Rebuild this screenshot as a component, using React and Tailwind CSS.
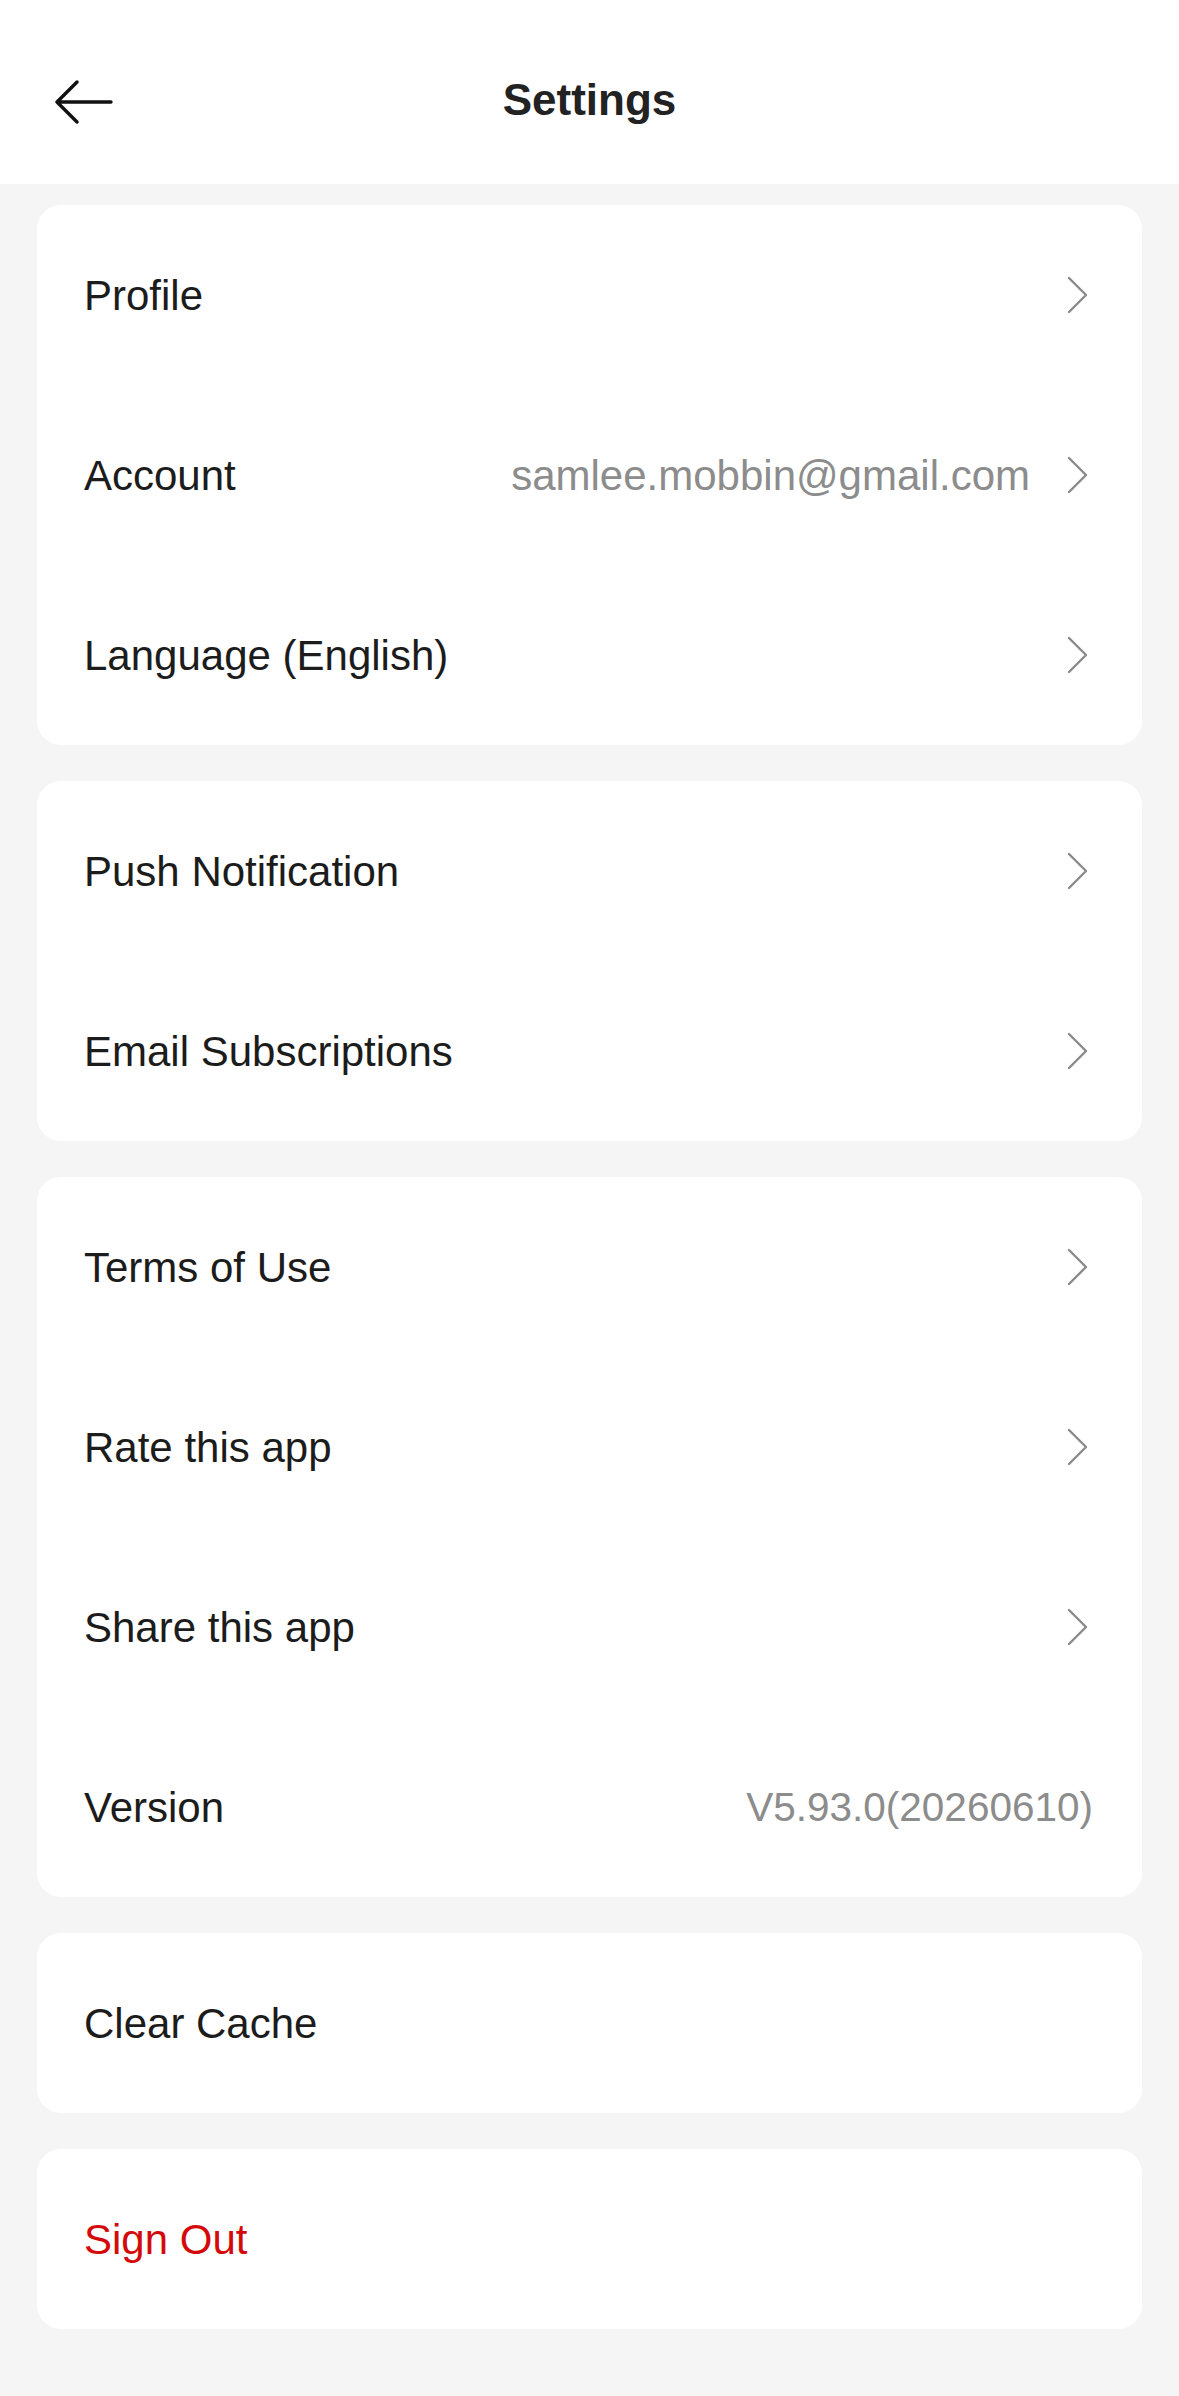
const Chevron = () => (
  <svg width="22" height="38" viewBox="0 0 22 38" fill="none" className="shrink-0">
    <path d="M2 2 L19 19 L2 36" stroke="#8a8a8a" strokeWidth="2.4" strokeLinecap="round" strokeLinejoin="round" />
  </svg>
)

const sections = [
  [
    { label: 'Profile', arrow: true },
    { label: 'Account', value: 'samlee.mobbin@gmail.com', arrow: true },
    { label: 'Language (English)', arrow: true },
  ],
  [
    { label: 'Push Notification', arrow: true },
    { label: 'Email Subscriptions', arrow: true },
  ],
  [
    { label: 'Terms of Use', arrow: true },
    { label: 'Rate this app', arrow: true },
    { label: 'Share this app', arrow: true },
    { label: 'Version', value: 'V5.93.0(20260610)' },
  ],
  [{ label: 'Clear Cache' }],
  [{ label: 'Sign Out', danger: true }],
]

function Row({ item }) {
  return (
    <div className="flex items-center h-[180px] pl-[47px] pr-[53px]">
      <span className={`flex-1 text-[42px] ${item.danger ? 'text-[#d40a0a]' : 'text-[#1c1c1c]'}`}>
        {item.label}
      </span>
      {item.value && (
        <span className={`text-[#8c8c8c] ${item.arrow ? 'mr-[37px] text-[42px]' : '-mr-[4px] text-[40.5px]'}`}>{item.value}</span>
      )}
      {item.arrow && <Chevron />}
    </div>
  )
}

export default function App() {
  return (
    <div className="min-h-screen bg-[#f5f5f5] pb-[67px]" style={{ fontFamily: '"Liberation Sans", Arial, sans-serif' }}>
      <header className="relative flex items-center justify-center h-[184px] pt-[16px] bg-white">
        <button className="absolute left-[55px] top-[80px]">
          <svg width="58" height="44" viewBox="0 0 58 44" fill="none">
            <path d="M56 22 H3 M22 2 L2 22 L22 42" stroke="#111" strokeWidth="3.4" strokeLinecap="round" strokeLinejoin="round" />
          </svg>
        </button>
        <h1 className="text-[44px] font-semibold text-[#222]">Settings</h1>
      </header>
      <div className="flex flex-col gap-[36px] px-[37px] pt-[21px]">
        {sections.map((rows, i) => (
          <div key={i} className="bg-white rounded-[24px]">
            {rows.map((r) => (
              <Row key={r.label} item={r} />
            ))}
          </div>
        ))}
      </div>
    </div>
  )
}
